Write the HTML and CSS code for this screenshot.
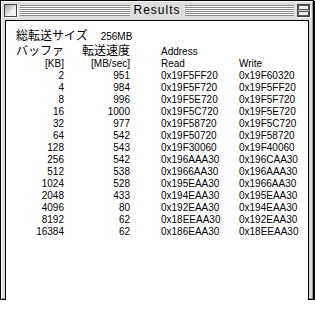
FILE: index.html
```html
<!DOCTYPE html>
<html lang="ja">
<head>
    <meta charset="UTF-8">
    <title>Results</title>
    <link rel="stylesheet" href="styles.css">
</head>
<body>
<div class="window">
    <div class="titleBar">
        <span class="closeBox"></span>
        <span class="stripes"></span>
        <span class="title">Results</span>
        <span class="stripes"></span>
        <span class="shadeBox"><i></i><i></i></span>
    </div>
    <div class="content">
        <div class="total"><span class="jp">総転送サイズ</span><span class="size">256MB</span></div>
        <div class="grid">
            <span class="jp num">バッファ</span><span class="jp num">転送速度</span><span class="addr headAddr">Address</span><span></span>
            <span class="num">[KB]</span><span class="num">[MB/sec]</span><span class="addr">Read</span><span>Write</span>
            <span class="num">2</span><span class="num">951</span><span class="addr">0x19F5FF20</span><span>0x19F60320</span>
            <span class="num">4</span><span class="num">984</span><span class="addr">0x19F5F720</span><span>0x19F5FF20</span>
            <span class="num">8</span><span class="num">996</span><span class="addr">0x19F5E720</span><span>0x19F5F720</span>
            <span class="num">16</span><span class="num">1000</span><span class="addr">0x19F5C720</span><span>0x19F5E720</span>
            <span class="num">32</span><span class="num">977</span><span class="addr">0x19F58720</span><span>0x19F5C720</span>
            <span class="num">64</span><span class="num">542</span><span class="addr">0x19F50720</span><span>0x19F58720</span>
            <span class="num">128</span><span class="num">543</span><span class="addr">0x19F30060</span><span>0x19F40060</span>
            <span class="num">256</span><span class="num">542</span><span class="addr">0x196AAA30</span><span>0x196CAA30</span>
            <span class="num">512</span><span class="num">538</span><span class="addr">0x1966AA30</span><span>0x196AAA30</span>
            <span class="num">1024</span><span class="num">528</span><span class="addr">0x195EAA30</span><span>0x1966AA30</span>
            <span class="num">2048</span><span class="num">433</span><span class="addr">0x194EAA30</span><span>0x195EAA30</span>
            <span class="num">4096</span><span class="num">80</span><span class="addr">0x192EAA30</span><span>0x194EAA30</span>
            <span class="num">8192</span><span class="num">62</span><span class="addr">0x18EEAA30</span><span>0x192EAA30</span>
            <span class="num">16384</span><span class="num">62</span><span class="addr">0x186EAA30</span><span>0x18EEAA30</span>
        </div>
    </div>
</div>
</body>
</html>
```

FILE: styles.css
```css
body {
    margin: 0;
    background: #fff;
    font-family: "Liberation Sans", "Noto Sans CJK JP", sans-serif;
    font-size: 10px;
    color: #000;
}

.window {
    width: 304px;
    height: 294px;
    padding: 0 4px 4px 4px;
    border: 1px solid #000;
    background: #dddddd;
    box-shadow: inset 1px 1px 0 #fff, inset -1px -1px 0 #999, 1px 1px 0 #000;
}

.titleBar {
    display: flex;
    align-items: center;
    height: 19px;
    margin: 0 -1px 0 -1px;
}

.closeBox, .shadeBox {
    flex: none;
    width: 11px;
    height: 11px;
    border: 1px solid #444;
    background: linear-gradient(135deg, #999 0%, #eee 60%, #fff 100%);
    box-shadow: 1px 1px 0 #fff;
}

.closeBox {
    margin-right: 3px;
}

.shadeBox {
    display: flex;
    flex-direction: column;
    justify-content: space-between;
    padding: 1px;
    width: 9px;
    height: 9px;
    background: #ccc;
    margin-left: 3px;
}

.shadeBox i {
    display: block;
    height: 3px;
    border: 1px solid #555;
    background: #eee;
    margin: -1px;
}

.stripes {
    flex: 1;
    height: 11px;
    background: repeating-linear-gradient(to bottom, #888 0 1px, #fff 1px 2px);
}

.title {
    padding: 0 4px;
    font-size: 12px;
    letter-spacing: 1px;
    line-height: 19px;
}

.content {
    height: 288px;
    border: 1px solid #000;
    background: #fff;
    padding: 0 0 0 1px;
}

.total {
    display: flex;
    align-items: baseline;
    margin: 9px 0 0 9px;
    height: 13px;
    line-height: 13px;
}

.jp {
    font-size: 12px;
}

.size {
    margin-left: 13px;
}

.grid {
    display: grid;
    grid-template-columns: 57px 66px 109px 1fr;
    grid-template-rows: 13px;
    grid-auto-rows: 12px;
    line-height: 12px;
    margin-top: 2px;
}

.grid > .jp {
    line-height: 13px;
    height: 13px;
}

.num {
    text-align: right;
}

.addr {
    padding-left: 31px;
}

.headAddr {
    padding-top: 1px;
}
```
